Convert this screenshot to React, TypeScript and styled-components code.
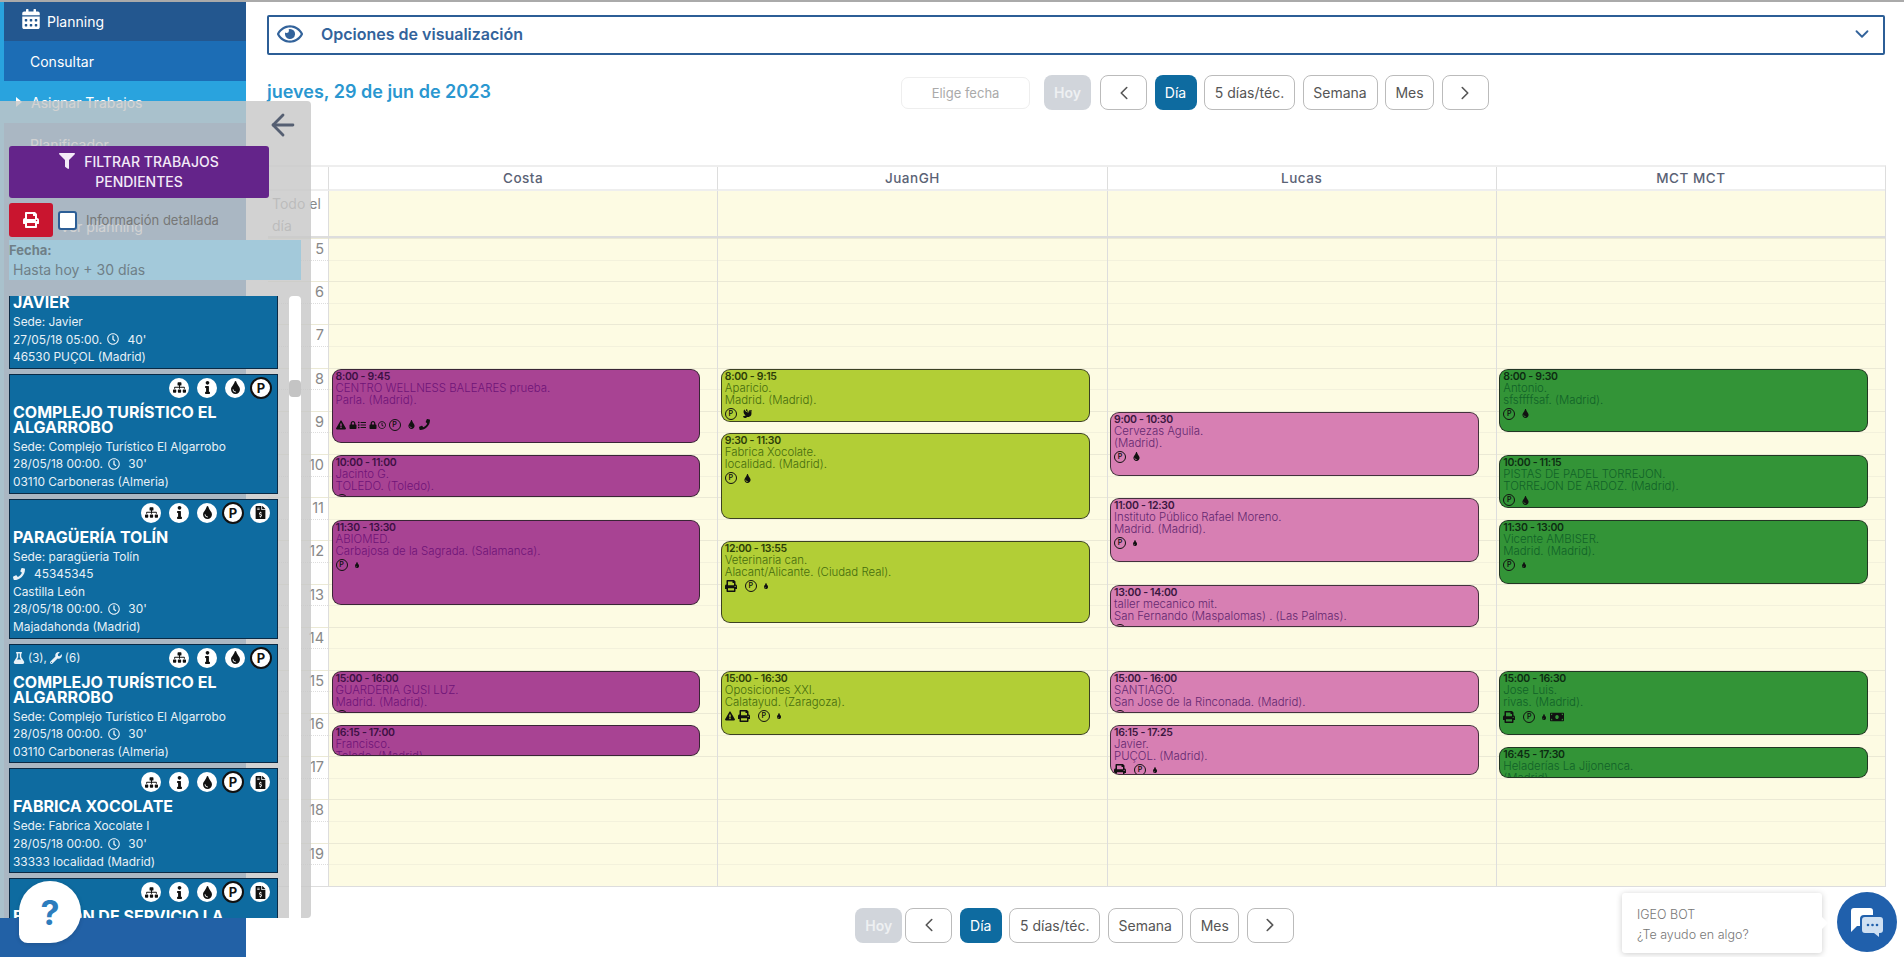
import { ReactNode } from 'react';
import styled, { createGlobalStyle } from 'styled-components';
import { ArrowLeft, ChevronDown, ChevronLeft, ChevronRight } from 'lucide-react';
import {
    FaCalendarAlt,
    FaDove,
    FaExclamationTriangle,
    FaFileInvoiceDollar,
    FaFilter,
    FaFlask,
    FaInfo,
    FaList,
    FaLock,
    FaMoneyBill,
    FaPhone,
    FaPrint,
    FaRegClock,
    FaRegEye,
    FaSitemap,
    FaTint,
    FaWrench
} from 'react-icons/fa';

const HOUR = 43.2;
const FIRST_HOUR = 5;

type Tone = 'magenta' | 'lime' | 'pink' | 'green';
type Mark = 'warn' | 'print' | 'p' | 'drop' | 'dropSm' | 'phone' | 'lockList' | 'lockClock' | 'dove' | 'money';

const tones: Record<Tone, { bg: string; time: string; text: string }> = {
    magenta: { bg: '#a84393', time: '#3d1044', text: '#6f1478' },
    lime: { bg: '#b2ce36', time: '#2c3d08', text: '#456c0e' },
    pink: { bg: '#d77fb3', time: '#3b1640', text: '#642870' },
    green: { bg: '#339437', time: '#0d2c12', text: '#116228' }
};

const GlobalStyle = createGlobalStyle`
    html, body {
        margin: 0;
        height: 100%;
        overflow: hidden;
        background: #fff;
        font-family: Inter, "Liberation Sans", sans-serif;
    }
    * {
        box-sizing: border-box;
    }
`;

const Page = styled.div`
    position: relative;
    display: flex;
    height: 957px;
    border-top: 2px solid #aaa;
    overflow: hidden;
`;

const Sidebar = styled.nav`
    display: flex;
    flex-direction: column;
    width: 246px;
    flex-shrink: 0;
    padding-left: 4px;
    background: #29a3de;
    color: #fff;
    font-size: 14px;
`;

const NavRow = styled.div<{ $bg?: string; $height: number; $indent: number }>`
    display: flex;
    align-items: center;
    gap: 6px;
    height: ${p => p.$height}px;
    padding-left: ${p => p.$indent}px;
    background: ${p => p.$bg || 'transparent'};
`;

const PlanningIcon = styled(FaCalendarAlt)`
    margin-bottom: 6px;
`;

const NavFill = styled.div`
    flex: 1;
    padding: 13px 0 0 26px;
    background: #2a6fb0;
`;

const NavLater = styled.div`
    margin-top: 65px;
    padding-left: 30px;
`;

const NavFooter = styled.div`
    height: 39px;
    margin-left: -4px;
    background: #2261a6;
`;

const Triangle = styled.span`
    width: 0;
    height: 0;
    margin-right: 3px;
    border-left: 6px solid #fff;
    border-top: 5px solid transparent;
    border-bottom: 5px solid transparent;
`;

const Main = styled.main`
    flex: 1;
    min-width: 0;
    padding: 13px 19px 0 21px;
`;

const Accordion = styled.div`
    display: flex;
    align-items: center;
    height: 40px;
    padding: 0 10px 2px 8px;
    border: 2px solid #2c5e96;
    border-radius: 2px;
    color: #33639b;
    font-size: 16px;
    font-weight: 600;
`;

const AccordionLabel = styled.span`
    flex: 1;
    margin-left: 18px;
`;

const DateRow = styled.div`
    display: flex;
    align-items: center;
    height: 35px;
    margin-top: 20px;
`;

const DateTitle = styled.h2`
    width: 634px;
    margin: 0 0 3px;
    color: #2a97d0;
    font-size: 18px;
    font-weight: 600;
`;

const DateInput = styled.input`
    width: 129px;
    height: 32px;
    margin-right: 14px;
    border: 1px solid #eee;
    border-radius: 7px;
    font: inherit;
    font-size: 13px;
    text-align: center;
    &::placeholder {
        color: #aaa;
    }
`;

const Toolbar = styled.div<{ $center?: boolean }>`
    display: flex;
    align-items: center;
    justify-content: ${p => (p.$center ? 'center' : 'flex-start')};
    gap: 7.5px;
    ${p => p.$center && 'margin: 21px 0 0 -3px;'}
`;

const CalButton = styled.button<{ $variant?: 'muted' | 'active'; $width: number; $shift?: number }>`
    display: flex;
    align-items: center;
    justify-content: center;
    width: ${p => p.$width}px;
    height: 35px;
    margin-left: ${p => p.$shift || 0}px;
    padding: 0;
    border: 1px solid ${p => (p.$variant ? 'transparent' : '#bbb')};
    border-radius: 8px;
    background: ${p => (p.$variant === 'muted' ? '#d1d5db' : p.$variant === 'active' ? '#0e6ba0' : '#fff')};
    color: ${p => (p.$variant === 'muted' ? '#eef0f2' : p.$variant === 'active' ? '#fff' : '#555')};
    font-family: inherit;
    font-size: 14px;
    font-weight: ${p => (p.$variant === 'muted' ? 600 : 400)};
`;

const Calendar = styled.section`
    margin: 55px -1px 0 1px;
    border-top: 2px solid #eee;
    border-right: 1px solid #ddd;
    border-bottom: 1px solid #ddd;
`;

const CalRow = styled.div`
    display: grid;
    grid-template-columns: 60px repeat(4, 1fr);
`;

const HeadCell = styled.div`
    height: 24px;
    border-left: 1px solid #ddd;
    border-bottom: 2px solid #eee;
    color: #5a6275;
    font-size: 13.5px;
    font-weight: 500;
    letter-spacing: 0.5px;
    line-height: 22px;
    text-align: center;
`;

const HeadBlank = styled.div`
    border-bottom: 2px solid #eee;
`;

const AllDayLabel = styled.div`
    height: 47px;
    padding: 2px 0 0 4px;
    border-bottom: 2px solid #ddd;
    color: #888;
    font-size: 14px;
    line-height: 22px;
`;

const AllDayCell = styled.div`
    height: 47px;
    border-left: 1px solid #ddd;
    border-bottom: 2px solid #ddd;
    background: #fdfbe3;
`;

const Slot = styled.div<{ $major: boolean; $dotted?: boolean }>`
    height: ${HOUR / 2}px;
    border-top: ${p => (p.$major ? '1px solid #ebe9d5' : `1px ${p.$dotted ? 'dotted #ddd' : 'solid #f3f1dc'}`)};
`;

const HourLabel = styled.div`
    padding-right: 4px;
    color: #888;
    font-size: 14.5px;
    line-height: 20px;
    text-align: right;
`;

const DayColumn = styled.div`
    position: relative;
    border-left: 1px solid #ddd;
    background: #fdfbe3;
`;

const EventBox = styled.div<{ $tone: Tone }>`
    position: absolute;
    left: 2.5px;
    right: 17px;
    padding: 2px 0 0 3px;
    overflow: hidden;
    border: 1.5px solid rgba(30, 30, 30, 0.8);
    border-radius: 9px;
    background: ${p => tones[p.$tone].bg};
    color: ${p => tones[p.$tone].text};
    font-size: 11.4px;
    font-weight: 300;
    line-height: 12px;
`;

const EventTime = styled.div<{ $tone: Tone }>`
    color: ${p => tones[p.$tone].time};
    font-size: 10.5px;
    font-weight: 600;
    letter-spacing: -0.3px;
    line-height: 10px;
`;

const EventMarks = styled.div<{ $spaced?: boolean }>`
    display: flex;
    align-items: center;
    gap: 3px;
    margin-top: ${p => (p.$spaced ? 13 : 2)}px;
    color: #111;
    font-size: 10px;
`;

const MarkPair = styled.span`
    display: inline-flex;
    align-items: center;
    gap: 1px;
    font-size: 8px;
`;

const SmallP = styled.span`
    display: inline-flex;
    align-items: center;
    justify-content: center;
    width: 12px;
    height: 12px;
    margin-right: 3px;
    border: 1px solid #111;
    border-radius: 50%;
    font-size: 7px;
    font-weight: 600;
`;

const Panel = styled.aside`
    position: absolute;
    top: 99px;
    left: 0;
    bottom: 39px;
    display: flex;
    flex-direction: column;
    width: 311px;
    padding-left: 9px;
    border-radius: 0 4px 4px 0;
    background: rgba(200, 200, 200, 0.81);
`;

const PanelTop = styled.div`
    display: flex;
    justify-content: flex-end;
    height: 45px;
    padding: 7px 11px 0 0;
    color: #555f72;
`;

const FilterButton = styled.button`
    display: block;
    width: 260px;
    height: 52px;
    padding: 0 18px;
    border: none;
    border-radius: 3px;
    background: #64248a;
    color: #f3eaf7;
    font-family: inherit;
    font-size: 14px;
    font-weight: 500;
    line-height: 20px;
`;

const FilterIcon = styled(FaFilter)`
    margin-right: 9px;
    font-size: 16px;
    vertical-align: -2px;
`;

const PrintRow = styled.div`
    display: flex;
    align-items: center;
    height: 34px;
    margin-top: 5px;
`;

const PrintButton = styled.button`
    display: flex;
    align-items: center;
    justify-content: center;
    width: 44px;
    height: 34px;
    border: none;
    border-radius: 3px;
    background: #c9152f;
    color: #fff;
    font-size: 16px;
`;

const DetailCheck = styled.input`
    appearance: none;
    width: 19px;
    height: 19px;
    margin: 0 9px 0 5px;
    border: 2px solid #2c5e96;
    border-radius: 3px;
    background: #fff;
`;

const DetailLabel = styled.label`
    color: #777;
    font-size: 13px;
`;

const FechaBlock = styled.div`
    width: 292px;
    height: 40px;
    margin-top: 3px;
    background: #a3c9da;
    color: #6f7f87;
    line-height: 20px;
`;

const FechaTitle = styled.div`
    font-size: 13px;
    font-weight: 700;
`;

const FechaValue = styled.div`
    padding-left: 4px;
    font-size: 14px;
`;

const ListArea = styled.div`
    display: flex;
    flex: 1;
    min-height: 0;
    margin-top: 16px;
`;

const CardList = styled.div`
    width: 269px;
    overflow: hidden;
`;

const CardStack = styled.div`
    display: flex;
    flex-direction: column;
    gap: 5px;
    margin-top: -32px;
`;

const Card = styled.article`
    padding: 3px 7px 2px 3px;
    border: 1px solid #0a2a45;
    background: #0e6ba0;
    color: #e8f1f7;
`;

const CardTop = styled.div`
    display: flex;
    align-items: center;
    justify-content: space-between;
    height: 20px;
`;

const CardMeta = styled.div`
    display: flex;
    align-items: center;
    gap: 3px;
    font-size: 11.5px;
`;

const CardBadges = styled.div`
    display: flex;
    align-items: center;
    gap: 8px;
    margin-left: auto;
`;

const Badge = styled.span`
    display: flex;
    align-items: center;
    justify-content: center;
    width: 20px;
    height: 20px;
    border-radius: 50%;
    background: #fff;
    color: #111;
    font-size: 13px;
`;

const ParkBadge = styled(Badge)`
    width: 22px;
    height: 22px;
    margin: 0 -2px 0 -3px;
    border: 2px solid #111;
    font-size: 13px;
    font-weight: 700;
`;

const CardTitle = styled.h3`
    margin: 7px 0 3px;
    color: #fff;
    font-size: 16px;
    font-weight: 700;
    line-height: 15px;
`;

const CardLine = styled.div`
    display: flex;
    align-items: center;
    gap: 5px;
    font-size: 11.9px;
    line-height: 17.6px;
    white-space: nowrap;
`;

const PhoneMark = styled(FaPhone)`
    margin-right: 4px;
`;

const Track = styled.div`
    width: 12px;
    margin-left: 11px;
    padding-top: 84px;
    border-radius: 4px 4px 0 0;
    background: #fff;
`;

const Thumb = styled.div`
    height: 17px;
    border-radius: 4px;
    background: #c4c4c4;
`;

const HelpBubble = styled.div`
    position: absolute;
    left: 19px;
    top: 879px;
    display: flex;
    align-items: center;
    justify-content: center;
    width: 62px;
    height: 62px;
    border-radius: 50% 50% 50% 14%;
    background: #fff;
    box-shadow: 0 1px 4px rgba(0, 0, 0, 0.15);
    color: #2d7dbd;
    font-size: 34px;
    font-weight: 700;
`;

const ChatCard = styled.div`
    position: absolute;
    left: 1622px;
    top: 891px;
    width: 200px;
    height: 60px;
    padding: 12px 15px;
    border-radius: 3px;
    background: #fff;
    box-shadow: 0 1px 6px rgba(0, 0, 0, 0.2);
    color: #777;
    font-size: 12.5px;
    font-weight: 300;
    line-height: 20px;
    &::after {
        content: '';
        position: absolute;
        top: 24px;
        right: -6px;
        border-left: 6px solid #fff;
        border-top: 6px solid transparent;
        border-bottom: 6px solid transparent;
    }
`;

const ChatButton = styled.div`
    position: absolute;
    left: 1837px;
    top: 890px;
    display: flex;
    align-items: center;
    justify-content: center;
    width: 60px;
    height: 60px;
    border-radius: 50%;
    background: #2060ac;
`;

type CalEvent = { start: number; end: number; time: string; title: string; place: string; marks: Mark[]; spaced?: boolean };

const columns: { name: string; tone: Tone; events: CalEvent[] }[] = [
    {
        name: 'Costa',
        tone: 'magenta',
        events: [
            { start: 8, end: 9.75, time: '8:00 - 9:45', title: 'CENTRO WELLNESS BALEARES prueba.', place: 'Parla. (Madrid).', marks: ['warn', 'lockList', 'lockClock', 'p', 'drop', 'phone'], spaced: true },
            { start: 10, end: 11, time: '10:00 - 11:00', title: 'Jacinto G.', place: 'TOLEDO. (Toledo).', marks: ['p'] },
            { start: 11.5, end: 13.5, time: '11:30 - 13:30', title: 'ABIOMED.', place: 'Carbajosa de la Sagrada. (Salamanca).', marks: ['p', 'dropSm'] },
            { start: 15, end: 16, time: '15:00 - 16:00', title: 'GUARDERIA GUSI LUZ.', place: 'Madrid. (Madrid).', marks: ['p'] },
            { start: 16.25, end: 17, time: '16:15 - 17:00', title: 'Francisco.', place: 'Toledo. (Madrid).', marks: [] }
        ]
    },
    {
        name: 'JuanGH',
        tone: 'lime',
        events: [
            { start: 8, end: 9.25, time: '8:00 - 9:15', title: 'Aparicio.', place: 'Madrid. (Madrid).', marks: ['p', 'dove'] },
            { start: 9.5, end: 11.5, time: '9:30 - 11:30', title: 'Fabrica Xocolate.', place: 'localidad. (Madrid).', marks: ['p', 'drop'] },
            { start: 12, end: 13.92, time: '12:00 - 13:55', title: 'Veterinaria can.', place: 'Alacant/Alicante. (Ciudad Real).', marks: ['print', 'p', 'dropSm'] },
            { start: 15, end: 16.5, time: '15:00 - 16:30', title: 'Oposiciones XXI.', place: 'Calatayud. (Zaragoza).', marks: ['warn', 'print', 'p', 'dropSm'] }
        ]
    },
    {
        name: 'Lucas',
        tone: 'pink',
        events: [
            { start: 9, end: 10.5, time: '9:00 - 10:30', title: 'Cervezas Aguila.', place: '(Madrid).', marks: ['p', 'drop'] },
            { start: 11, end: 12.5, time: '11:00 - 12:30', title: 'Instituto Público Rafael Moreno.', place: 'Madrid. (Madrid).', marks: ['p', 'dropSm'] },
            { start: 13, end: 14, time: '13:00 - 14:00', title: 'taller mecanico mit.', place: 'San Fernando (Maspalomas) . (Las Palmas).', marks: ['p'] },
            { start: 15, end: 16, time: '15:00 - 16:00', title: 'SANTIAGO.', place: 'San Jose de la Rinconada. (Madrid).', marks: ['p'] },
            { start: 16.25, end: 17.42, time: '16:15 - 17:25', title: 'Javier.', place: 'PUÇOL. (Madrid).', marks: ['print', 'p', 'dropSm'] }
        ]
    },
    {
        name: 'MCT MCT',
        tone: 'green',
        events: [
            { start: 8, end: 9.5, time: '8:00 - 9:30', title: 'Antonio.', place: 'sfsffffsaf. (Madrid).', marks: ['p', 'drop'] },
            { start: 10, end: 11.25, time: '10:00 - 11:15', title: 'PISTAS DE PADEL TORREJON.', place: 'TORREJON DE ARDOZ. (Madrid).', marks: ['p', 'drop'] },
            { start: 11.5, end: 13, time: '11:30 - 13:00', title: 'Vicente AMBISER.', place: 'Madrid. (Madrid).', marks: ['p', 'dropSm'] },
            { start: 15, end: 16.5, time: '15:00 - 16:30', title: 'Jose Luis.', place: 'rivas. (Madrid).', marks: ['print', 'p', 'dropSm', 'money'] },
            { start: 16.75, end: 17.5, time: '16:45 - 17:30', title: 'Heladerías La Jijonenca.', place: '(Madrid).', marks: [] }
        ]
    }
];

const hours = Array.from({ length: 15 }, (_, i) => FIRST_HOUR + i);

const EventMark = ({ mark }: { mark: Mark }) => {
    switch (mark) {
        case 'warn':
            return <FaExclamationTriangle size={10} />;
        case 'print':
            return <FaPrint size={12} style={{ marginRight: 5 }} />;
        case 'p':
            return <SmallP>P</SmallP>;
        case 'drop':
            return <FaTint size={9} />;
        case 'dropSm':
            return <FaTint size={6} />;
        case 'phone':
            return <FaPhone size={11} />;
        case 'dove':
            return <FaDove size={9} />;
        case 'money':
            return <FaMoneyBill size={14} />;
        case 'lockList':
            return (
                <MarkPair>
                    <FaLock />
                    <FaList />
                </MarkPair>
            );
        case 'lockClock':
            return (
                <MarkPair>
                    <FaLock />
                    <FaRegClock />
                </MarkPair>
            );
    }
};

const ToolbarButtons = ({ center }: { center?: boolean }) => (
    <Toolbar $center={center}>
        <CalButton $variant='muted' $width={47}>Hoy</CalButton>
        <CalButton $width={47} $shift={center ? -4.5 : 1.5} aria-label='Anterior'><ChevronLeft size={22} strokeWidth={1.75} /></CalButton>
        <CalButton $variant='active' $width={42}>Día</CalButton>
        <CalButton $width={91}>5 días/téc.</CalButton>
        <CalButton $width={75}>Semana</CalButton>
        <CalButton $width={49}>Mes</CalButton>
        <CalButton $width={47} aria-label='Siguiente'><ChevronRight size={22} strokeWidth={1.75} /></CalButton>
    </Toolbar>
);

const HourSlots = () => (
    <>
        {hours.map(h => (
            <div key={h}>
                <Slot $major />
                <Slot $major={false} />
            </div>
        ))}
    </>
);

const CalendarGrid = () => (
    <Calendar>
        <CalRow>
            <HeadBlank />
            {columns.map(c => (
                <HeadCell key={c.name}>{c.name}</HeadCell>
            ))}
        </CalRow>
        <CalRow>
            <AllDayLabel>Todo el día</AllDayLabel>
            {columns.map(c => (
                <AllDayCell key={c.name} />
            ))}
        </CalRow>
        <CalRow>
            <div>
                {hours.map(h => (
                    <div key={h}>
                        <Slot $major>
                            <HourLabel>{h}</HourLabel>
                        </Slot>
                        <Slot $major={false} $dotted />
                    </div>
                ))}
            </div>
            {columns.map(c => (
                <DayColumn key={c.name}>
                    <HourSlots />
                    {c.events.map(e => (
                        <EventBox
                            key={e.time}
                            $tone={c.tone}
                            style={{
                                top: (e.start - FIRST_HOUR) * HOUR + 1,
                                height: (e.end - e.start) * HOUR - 1
                            }}
                        >
                            <EventTime $tone={c.tone}>{e.time}</EventTime>
                            <div>{e.title}</div>
                            <div>{e.place}</div>
                            <EventMarks $spaced={e.spaced}>
                                {e.marks.map((m, i) => (
                                    <EventMark key={i} mark={m} />
                                ))}
                            </EventMarks>
                        </EventBox>
                    ))}
                </DayColumn>
            ))}
        </CalRow>
    </Calendar>
);

const JobCard = ({ title, lines, invoice, meta }: { title: string; lines: ReactNode[]; invoice?: boolean; meta?: boolean }) => (
    <Card>
        <CardTop>
            {meta && (
                <CardMeta>
                    <FaFlask size={12} /> (3),<FaWrench size={12} /> (6)
                </CardMeta>
            )}
            <CardBadges>
                <Badge><FaSitemap /></Badge>
                <Badge><FaInfo /></Badge>
                <Badge><FaTint /></Badge>
                <ParkBadge>P</ParkBadge>
                {invoice && <Badge><FaFileInvoiceDollar /></Badge>}
            </CardBadges>
        </CardTop>
        <CardTitle>{title}</CardTitle>
        {lines.map((line, i) => (
            <CardLine key={i}>{line}</CardLine>
        ))}
    </Card>
);

const when = (date: string, mins: string) => (
    <>
        {date} <FaRegClock size={12} /> &nbsp;{mins}
    </>
);

const PendingPanel = () => (
    <Panel>
        <PanelTop>
            <ArrowLeft size={34} strokeWidth={2} />
        </PanelTop>
        <FilterButton>
            <FilterIcon />
            FILTRAR TRABAJOS PENDIENTES
        </FilterButton>
        <PrintRow>
            <PrintButton aria-label='Imprimir'><FaPrint /></PrintButton>
            <DetailCheck type='checkbox' id='detalle' />
            <DetailLabel htmlFor='detalle'>Información detallada</DetailLabel>
        </PrintRow>
        <FechaBlock>
            <FechaTitle>Fecha:</FechaTitle>
            <FechaValue>Hasta hoy + 30 días</FechaValue>
        </FechaBlock>
        <ListArea>
            <CardList>
                <CardStack>
                    <JobCard title='JAVIER' lines={['Sede: Javier', when('27/05/18 05:00.', "40'"), '46530 PUÇOL (Madrid)']} />
                    <JobCard
                        title='COMPLEJO TURÍSTICO EL ALGARROBO'
                        lines={['Sede: Complejo Turístico El Algarrobo', when('28/05/18 00:00.', "30'"), '03110 Carboneras (Almeria)']}
                    />
                    <JobCard
                        invoice
                        title='PARAGÜERÍA TOLÍN'
                        lines={[
                            'Sede: paragüeria Tolín',
                            <>
                                <PhoneMark size={12} /> 45345345
                            </>,
                            'Castilla León',
                            when('28/05/18 00:00.', "30'"),
                            'Majadahonda (Madrid)'
                        ]}
                    />
                    <JobCard
                        meta
                        title='COMPLEJO TURÍSTICO EL ALGARROBO'
                        lines={['Sede: Complejo Turístico El Algarrobo', when('28/05/18 00:00.', "30'"), '03110 Carboneras (Almeria)']}
                    />
                    <JobCard
                        invoice
                        title='FABRICA XOCOLATE'
                        lines={['Sede: Fabrica Xocolate I', when('28/05/18 00:00.', "30'"), '33333 localidad (Madrid)']}
                    />
                    <JobCard invoice title='ESTACIÓN DE SERVICIO LA' lines={[]} />
                </CardStack>
            </CardList>
            <Track>
                <Thumb />
            </Track>
        </ListArea>
    </Panel>
);

const ChatIcon = () => (
    <svg width='34' height='32' viewBox='0 0 34 32'>
        <path d='M4 2h16a3 3 0 0 1 3 3v4H14a4 4 0 0 0-4 4v7H7l-6 6V5a3 3 0 0 1 3-3z' fill='#fff' />
        <path d='M15 11h15a3 3 0 0 1 3 3v10a3 3 0 0 1-3 3h-1v4l-5-4h-9a3 3 0 0 1-3-3V14a3 3 0 0 1 3-3z' fill='#cfe0f2' />
        <circle cx='18' cy='19' r='1.3' fill='#2060ac' />
        <circle cx='22.5' cy='19' r='1.3' fill='#2060ac' />
        <circle cx='27' cy='19' r='1.3' fill='#2060ac' />
    </svg>
);

const App = () => {
    return (
        <Page>
            <GlobalStyle />
            <Sidebar>
                <NavRow $bg='#23578f' $height={39} $indent={17}>
                    <PlanningIcon size={20} />
                    Planning
                </NavRow>
                <NavRow $bg='#1c6db5' $height={40} $indent={26}>Consultar</NavRow>
                <NavRow $height={42} $indent={12}>
                    <Triangle />
                    Asignar Trabajos
                </NavRow>
                <NavFill>
                    Planificador
                    <NavLater>Ver planning</NavLater>
                </NavFill>
                <NavFooter />
            </Sidebar>
            <Main>
                <Accordion>
                    <FaRegEye size={26} />
                    <AccordionLabel>Opciones de visualización</AccordionLabel>
                    <ChevronDown size={22} strokeWidth={2} />
                </Accordion>
                <DateRow>
                    <DateTitle>jueves, 29 de jun de 2023</DateTitle>
                    <DateInput placeholder='Elige fecha' />
                    <ToolbarButtons />
                </DateRow>
                <CalendarGrid />
                <ToolbarButtons center />
            </Main>
            <PendingPanel />
            <HelpBubble>?</HelpBubble>
            <ChatCard>
                IGEO BOT
                <br />
                ¿Te ayudo en algo?
            </ChatCard>
            <ChatButton>
                <ChatIcon />
            </ChatButton>
        </Page>
    );
};

export default App;
